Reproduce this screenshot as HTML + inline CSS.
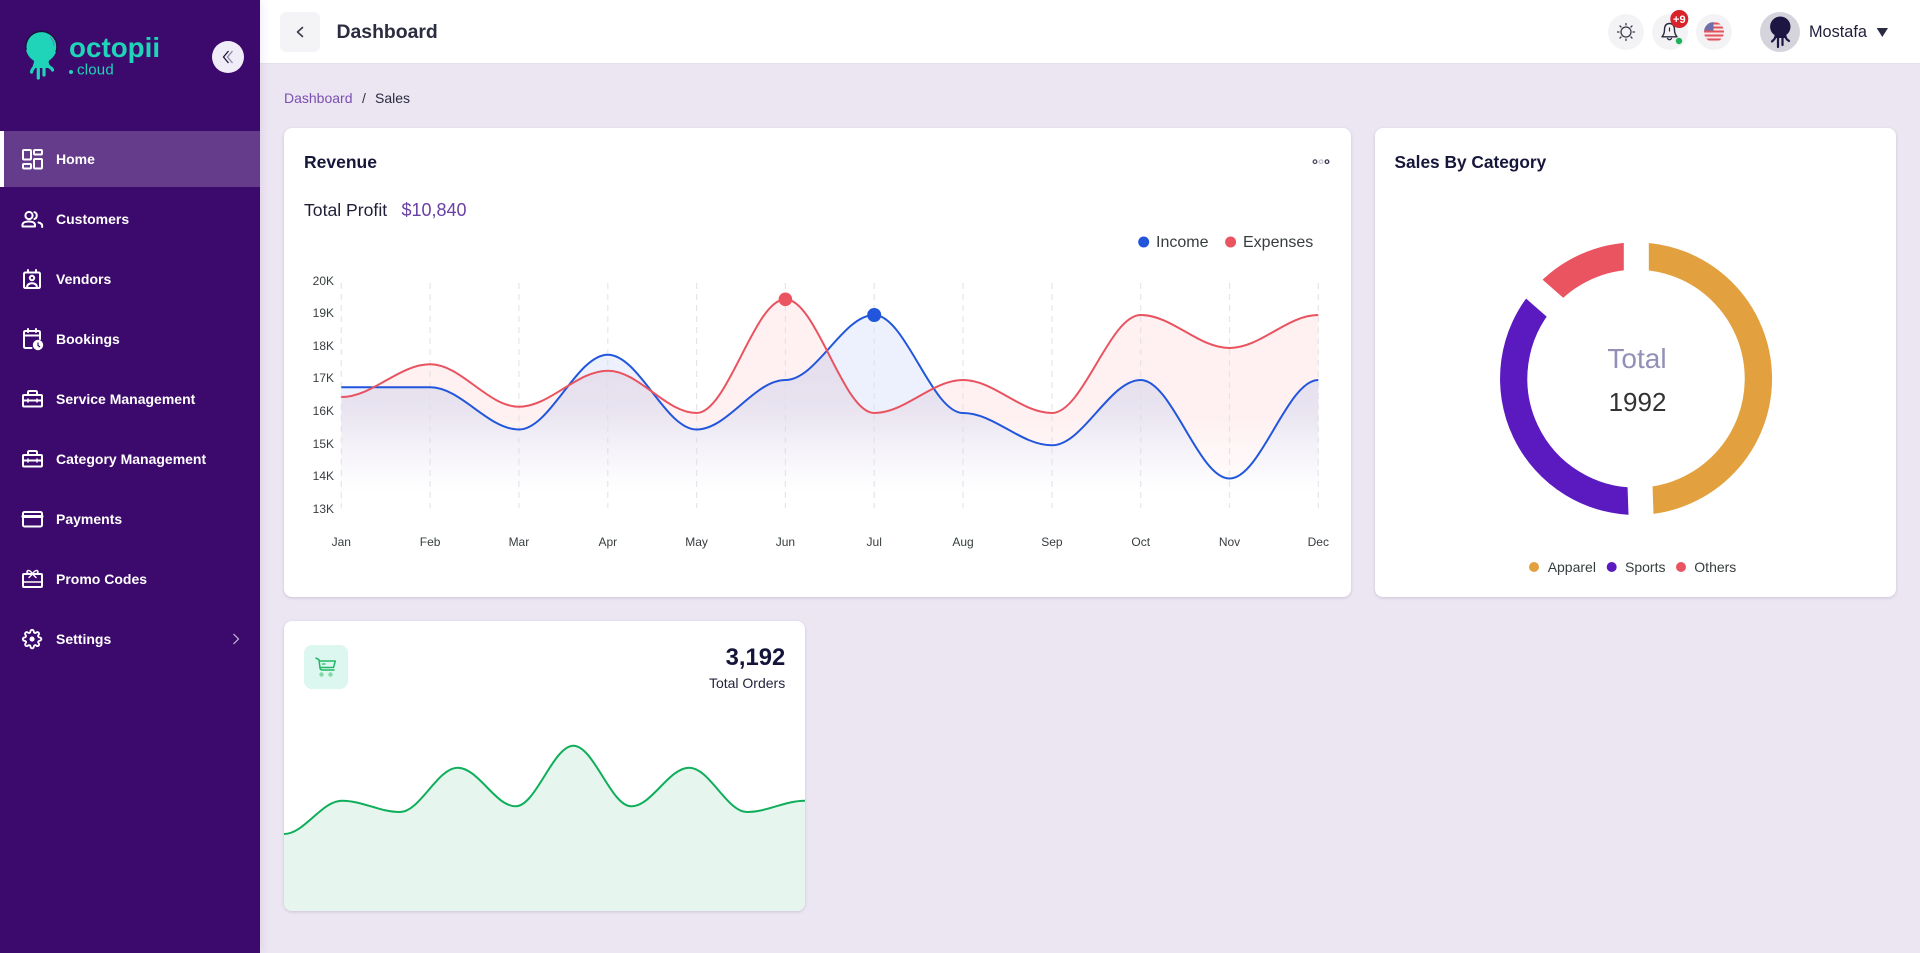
<!DOCTYPE html>
<html><head><meta charset="utf-8"><title>Dashboard</title>
<style>
*{box-sizing:border-box}
html,body{margin:0;padding:0;width:1920px;height:953px;overflow:hidden;background:#ece6f2;font-family:"Liberation Sans",sans-serif}
.t{position:absolute;white-space:nowrap;line-height:20px;height:20px}
#side{position:absolute;left:0;top:0;width:260px;height:953px;background:#3c0a6c;box-shadow:2px 0 8px rgba(60,10,108,.08)}
#act{position:absolute;left:0;top:131px;width:260px;height:56px;background:#653c8b;border-left:4px solid #fff}
.m{left:56px;color:#fff;font-weight:700;font-size:14px}
#head{position:absolute;left:260px;top:0;width:1660px;height:64px;background:#fff;border-bottom:1px solid #e4dfea}
.card{position:absolute;background:#fff;border-radius:8px;box-shadow:0 1px 3px rgba(60,40,90,.18)}
svg{position:absolute;left:0;top:0}
</style></head>
<body>
<div id="head"></div>
<div class="card" style="left:284px;top:128px;width:1067px;height:469px"></div>
<div class="card" style="left:1375px;top:128px;width:521px;height:469px"></div>
<div class="card" style="left:284px;top:621px;width:521px;height:290px"></div>
<div id="side"><div id="act"></div></div>

<div class="t" style="left:280px;top:12px;width:40px;height:40px;background:#f4f4f7;border-radius:6px"></div>
<div class="t" style="left:336.5px;top:22px;font-size:19.4px;font-weight:700;color:#2b2c40">Dashboard</div>
<div class="t" style="left:284px;top:88px;font-size:14px;color:#7a4fb0">Dashboard</div>
<div class="t" style="left:362px;top:88px;font-size:14px;color:#33334a">/</div>
<div class="t" style="left:375px;top:88px;font-size:14px;color:#2a2a40">Sales</div>
<div class="t" style="left:304px;top:152px;font-size:17.5px;font-weight:700;color:#16163a">Revenue</div>
<div class="t" style="left:304px;top:200px;font-size:17.6px;color:#1f1f38">Total Profit</div>
<div class="t" style="left:401.5px;top:200px;font-size:18px;color:#6a3fa5">$10,840</div>
<div class="t" style="left:1394.5px;top:152px;font-size:17.3px;font-weight:700;color:#16163a">Sales By Category</div>
<div class="t" style="right:1134.8px;top:646px;font-size:23.8px;font-weight:700;color:#14143a;line-height:24px;height:24px">3,192</div>
<div class="t" style="right:1134.8px;top:673px;font-size:14px;color:#24243e">Total Orders</div>
<div class="t" style="left:1809px;top:22px;font-size:16.3px;color:#1f1f3a">Mostafa</div>

<div class="t m" style="top:149px">Home</div>
<div class="t m" style="top:209px">Customers</div>
<div class="t m" style="top:269px">Vendors</div>
<div class="t m" style="top:329px">Bookings</div>
<div class="t m" style="top:389px">Service Management</div>
<div class="t m" style="top:449px">Category Management</div>
<div class="t m" style="top:509px">Payments</div>
<div class="t m" style="top:569px">Promo Codes</div>
<div class="t m" style="top:629px">Settings</div>

<svg width="1920" height="953" viewBox="0 0 1920 953" font-family="'Liberation Sans',sans-serif">
<defs>
<linearGradient id="gP" gradientUnits="userSpaceOnUse" x1="0" y1="375" x2="0" y2="492"><stop offset="0" stop-color="#e6dfee"/><stop offset=".3" stop-color="#e9e4f0"/><stop offset=".6" stop-color="#f4f1f8"/><stop offset="1" stop-color="#fff"/></linearGradient>
<linearGradient id="gR" gradientUnits="userSpaceOnUse" x1="0" y1="420" x2="0" y2="492"><stop offset="0" stop-color="#fff1f2"/><stop offset="1" stop-color="#fffdfd"/></linearGradient>
<clipPath id="cI"><path d="M341.3 387.3 C372.4 387.3 399 387.3 430.1 387.3 S487.8 429.5 518.9 429.5 S576.7 354.7 607.8 354.7 S665.5 429.5 696.6 429.5 S754.3 380 785.4 380 S843.1 315 874.2 315 S931.9 413 963 413 S1020.8 445.3 1051.9 445.3 S1109.6 380 1140.7 380 S1198.4 478.5 1229.5 478.5 S1287.2 380 1318.3 380 L1318.3 510 L341.3 510 Z"/></clipPath>
<clipPath id="cE"><path d="M341.3 397 C372.4 397 399 364.3 430.1 364.3 S487.8 406.7 518.9 406.7 S576.7 370.7 607.8 370.7 S665.5 413 696.6 413 S754.3 299.3 785.4 299.3 S843.1 413 874.2 413 S931.9 380 963 380 S1020.8 413 1051.9 413 S1109.6 315 1140.7 315 S1198.4 348 1229.5 348 S1287.2 315 1318.3 315 L1318.3 510 L341.3 510 Z"/></clipPath>
<clipPath id="cO"><rect x="284" y="621" width="521" height="290" rx="8"/></clipPath>
<clipPath id="cF"><circle cx="1714" cy="32" r="10"/></clipPath>
</defs>

<!-- revenue fills -->
<rect x="341" y="290" width="978" height="220" fill="url(#gR)" clip-path="url(#cE)"/>
<rect x="341" y="290" width="978" height="220" fill="#edf1fe" clip-path="url(#cI)"/>
<g clip-path="url(#cI)"><rect x="341" y="290" width="978" height="220" fill="url(#gP)" clip-path="url(#cE)"/></g>

<!-- grid -->
<g stroke="#dcdce6" stroke-opacity=".75" stroke-width="1.2" stroke-dasharray="6 5">
<path d="M341.3 283V508M430.1 283V508M518.9 283V508M607.8 283V508M696.6 283V508M785.4 283V508M874.2 283V508M963 283V508M1051.9 283V508M1140.7 283V508M1229.5 283V508M1318.3 283V508"/>
</g>

<!-- lines -->
<path fill="none" stroke="#2156dc" stroke-width="2" d="M341.3 387.3 C372.4 387.3 399 387.3 430.1 387.3 S487.8 429.5 518.9 429.5 S576.7 354.7 607.8 354.7 S665.5 429.5 696.6 429.5 S754.3 380 785.4 380 S843.1 315 874.2 315 S931.9 413 963 413 S1020.8 445.3 1051.9 445.3 S1109.6 380 1140.7 380 S1198.4 478.5 1229.5 478.5 S1287.2 380 1318.3 380"/>
<path fill="none" stroke="#e95360" stroke-width="2" d="M341.3 397 C372.4 397 399 364.3 430.1 364.3 S487.8 406.7 518.9 406.7 S576.7 370.7 607.8 370.7 S665.5 413 696.6 413 S754.3 299.3 785.4 299.3 S843.1 413 874.2 413 S931.9 380 963 380 S1020.8 413 1051.9 413 S1109.6 315 1140.7 315 S1198.4 348 1229.5 348 S1287.2 315 1318.3 315"/>
<circle cx="785.4" cy="299.3" r="6.8" fill="#ea5360"/>
<circle cx="874.2" cy="315" r="7" fill="#2156dc"/>

<!-- axes -->
<g font-size="12" fill="#373d3f" text-anchor="end">
<text x="334" y="285">20K</text><text x="334" y="317">19K</text><text x="334" y="350">18K</text><text x="334" y="382">17K</text><text x="334" y="415">16K</text><text x="334" y="448">15K</text><text x="334" y="480">14K</text><text x="334" y="513">13K</text>
</g>
<g font-size="12" fill="#373d3f" text-anchor="middle">
<text x="341.3" y="546">Jan</text><text x="430.1" y="546">Feb</text><text x="518.9" y="546">Mar</text><text x="607.8" y="546">Apr</text><text x="696.6" y="546">May</text><text x="785.4" y="546">Jun</text><text x="874.2" y="546">Jul</text><text x="963" y="546">Aug</text><text x="1051.9" y="546">Sep</text><text x="1140.7" y="546">Oct</text><text x="1229.5" y="546">Nov</text><text x="1318.3" y="546">Dec</text>
</g>
<circle cx="1143.7" cy="242" r="5.5" fill="#2156dc"/>
<text x="1156" y="247" font-size="16" fill="#373d3f">Income</text>
<circle cx="1230.6" cy="242" r="5.5" fill="#ea5360"/>
<text x="1243" y="247" font-size="16" fill="#373d3f">Expenses</text>

<!-- dots menu -->
<g fill="none" stroke-width="1.3"><circle cx="1315" cy="161.7" r="1.8" stroke="#4a4a60"/><circle cx="1321" cy="161.7" r="1.8" stroke="#c5c0d5"/><circle cx="1327" cy="161.7" r="1.8" stroke="#3a3a50"/></g>

<!-- donut -->
<g fill="none" stroke-width="27.3">
<path stroke="#e2a03f" d="M1636.3 256 A122.7 122.7 0 0 1 1640.6 501.3"/>
<path stroke="#5a1ac0" d="M1640.6 501.3 A122.7 122.7 0 0 1 1544.2 297.7"/>
<path stroke="#ea5460" d="M1544.2 297.7 A122.7 122.7 0 0 1 1636.3 256"/>
</g>
<g stroke="#fff" stroke-width="25"><path d="M1636.3 378.7 L1636.3 228"/><path d="M1636.3 378.7 L1641.5 528.6"/><path d="M1636.3 378.7 L1523.6 279.7"/></g>
<text x="1637" y="368" font-size="28" fill="#9390b8" text-anchor="middle">Total</text>
<text x="1637.5" y="411" font-size="26" fill="#333" text-anchor="middle">1992</text>
<circle cx="1534" cy="567" r="5" fill="#e2a03f"/><text x="1547.7" y="572" font-size="14" fill="#373d3f">Apparel</text>
<circle cx="1611.7" cy="567" r="5" fill="#5a1ac0"/><text x="1625" y="572" font-size="14" fill="#373d3f">Sports</text>
<circle cx="1681" cy="567" r="5" fill="#ea5460"/><text x="1694.3" y="572" font-size="14" fill="#373d3f">Others</text>

<!-- orders -->
<g clip-path="url(#cO)">
<path fill="#e6f6ee" d="M284 834 C304.3 834 321.6 800.7 341.9 800.7 S379.5 812 399.8 812 S437.4 767.7 457.7 767.7 S495.3 806.3 515.6 806.3 S553.1 745.7 573.4 745.7 S611 806.3 631.3 806.3 S668.9 767.7 689.2 767.7 S726.8 812 747.1 812 S784.7 800.7 805 800.7 L805 911 L284 911 Z"/>
<path fill="none" stroke="#0fae5a" stroke-width="2" d="M284 834 C304.3 834 321.6 800.7 341.9 800.7 S379.5 812 399.8 812 S437.4 767.7 457.7 767.7 S495.3 806.3 515.6 806.3 S553.1 745.7 573.4 745.7 S611 806.3 631.3 806.3 S668.9 767.7 689.2 767.7 S726.8 812 747.1 812 S784.7 800.7 805 800.7"/>
</g>
<rect x="304" y="645" width="44" height="44" rx="8" fill="#dcf6f0"/>
<g fill="none" stroke="#22b866" stroke-width="1.5" stroke-linecap="round" stroke-linejoin="round">
<path d="M316 658 L319 659.8 L320 668 Q320.3 670 322.5 670 H334"/>
<path d="M319.3 661 H335.3 L333.5 667.5 H320"/>
<path d="M322.5 664 H325" stroke-width="1.2"/>
</g>
<circle cx="321.5" cy="674.5" r="2.2" fill="#7fd9a8"/><circle cx="330.5" cy="674.5" r="2.2" fill="#7fd9a8"/>

<!-- header controls -->
<path d="M302.5 27.5 L297.5 32 L302.5 36.5" fill="none" stroke="#3a3a4e" stroke-width="1.6" stroke-linecap="round" stroke-linejoin="round"/>
<circle cx="1626" cy="32" r="18" fill="#f3f3f6"/>
<circle cx="1670" cy="32" r="18" fill="#f3f3f6"/>
<circle cx="1714" cy="32" r="18" fill="#f3f3f6"/>
<g fill="none" stroke="#3a3a4a" stroke-width="1.3" stroke-linecap="round">
<circle cx="1626" cy="32" r="5"/>
<path d="M1626 23.5V25M1626 39V40.5M1617.5 32H1619M1633 32H1634.5M1620 26L1621 27M1631 37L1632 38M1632 26L1631 27M1621 37L1620 38"/>
</g>
<g fill="none" stroke="#2a2a3c" stroke-width="1.4" stroke-linecap="round" stroke-linejoin="round">
<path d="M1669.5 23.5 C1665.5 23.5 1664.5 27 1664.5 30 C1664.5 33 1663.5 35 1662 36.8 H1677 C1675.5 35 1674.5 33 1674.5 30 C1674.5 27 1673.5 23.5 1669.5 23.5Z"/>
<path d="M1667.5 38.5 Q1669.5 41 1671.5 38.5"/>
<path d="M1669.5 28V31" stroke-width="1.2"/>
</g>
<circle cx="1679.3" cy="19" r="9" fill="#d8232a"/>
<text x="1679.3" y="23" font-size="11" font-weight="700" fill="#fff" text-anchor="middle">+9</text>
<circle cx="1679" cy="41" r="3.2" fill="#1fb05c"/>
<g clip-path="url(#cF)">
<rect x="1704" y="22" width="20" height="20" fill="#f6e9ea"/>
<path d="M1704 23.5H1724M1704 27.5H1724M1704 31.5H1724M1704 35.5H1724M1704 39.5H1724" stroke="#e2545c" stroke-width="2"/>
<rect x="1704" y="22" width="9.5" height="8.5" fill="#6e6fa8"/>
</g>
<circle cx="1780" cy="32" r="20" fill="#d5d3dc"/>
<circle cx="1780.3" cy="26.7" r="10.2" fill="#1d1542"/>
<path d="M1775 33H1786V38H1775Z" fill="#1d1542"/>
<g fill="none" stroke="#1d1542" stroke-width="2.2" stroke-linecap="round">
<path d="M1775.5 36C1775 40 1773 40 1772 41.5"/><path d="M1778 37V47"/><path d="M1782.5 37V45"/><path d="M1785.5 36C1786 40 1788 40 1789 41"/>
</g>
<path d="M1876.7 28H1888L1882.3 37Z" fill="#2a2a40"/>

<!-- logo -->
<circle cx="41.3" cy="47" r="15.5" fill="#1fd4b8"/>
<path d="M26 50 A15.5 15.5 0 0 1 56.8 44 A15.5 15.5 0 0 1 56 52" fill="none" stroke="#1a1240" stroke-width="1.6"/>
<path d="M50 37 A11 11 0 0 1 54 46" fill="none" stroke="#7a6fc0" stroke-width="1"/>
<path d="M33 58H49.5L47.5 68H35.5Z" fill="#1fd4b8"/>
<g fill="none" stroke="#1fd4b8" stroke-width="3.2" stroke-linecap="round">
<path d="M35 64C34.5 69 32 68 31.5 72"/><path d="M38.3 66V78"/><path d="M44 66V75"/><path d="M47.5 64C48 68 52 67 52.5 70"/>
</g>
<text x="69" y="57" font-size="27.8" font-weight="700" fill="#1fd4b8">octopii</text>
<circle cx="71" cy="72" r="2" fill="#1fd4b8"/>
<text x="77" y="74.5" font-size="15" letter-spacing=".2" fill="#1fd4b8">cloud</text>
<circle cx="228" cy="57" r="16" fill="#f0edf8"/>
<path d="M228.5 51 L223.5 57 L228.5 63" fill="none" stroke="#1f1a3a" stroke-width="1.3"/>
<path d="M232.5 51 L227.5 57 L232.5 63" fill="none" stroke="#8f88a8" stroke-width="1.3"/>

<!-- sidebar icons -->
<g fill="none" stroke="#fff" stroke-width="2" stroke-linejoin="round" stroke-linecap="round">
<rect x="23" y="150" width="8" height="9.5" rx="1"/><rect x="34" y="150" width="8" height="4.5" rx="1"/><rect x="23" y="164" width="8" height="4.5" rx="1"/><rect x="34" y="159" width="8" height="9.5" rx="1"/>
<!-- customers -->
<circle cx="29" cy="215.5" r="3.6"/><path d="M22.5 226.5 H35 C35.6 222.8 33 221.5 28.8 221.5 C24.6 221.5 21.8 222.8 22.5 226.5Z"/><path d="M34.5 212.2 C37.5 213 37.5 218 34.5 219"/><path d="M38.5 222.5 C41 223 42.5 224.5 42.2 227"/>
<!-- vendors -->
<rect x="24" y="272.5" width="16" height="15.5" rx="1.3"/><path d="M28 270V272.5M36 270V272.5"/><circle cx="32" cy="278" r="2.2"/><path d="M27 288 C27 284.5 29 283.2 32 283.2 C35 283.2 37 284.5 37 288"/>
<!-- bookings -->
<path d="M31.5 348 H25.5 Q24 348 24 346.5 V332.5 Q24 331 25.5 331 H38.5 Q40 331 40 332.5 V339"/><path d="M24 335.5H40M28 329V332M36 329V332"/>
<!-- service -->
<rect x="23" y="395" width="19" height="11.5" rx="1"/><path d="M28 395V392.5 Q28 391 29.5 391 H35.5 Q37 391 37 392.5 V395"/><path d="M23 400.5H42" /><path d="M28 399V402M37 399V402" stroke-width="1.5"/>
<!-- category -->
<rect x="23" y="455" width="19" height="11.5" rx="1"/><path d="M28 455V452.5 Q28 451 29.5 451 H35.5 Q37 451 37 452.5 V455"/><path d="M23 460.5H42"/><path d="M28 459V462M37 459V462" stroke-width="1.5"/>
<!-- payments -->
<rect x="23" y="512" width="19" height="14.5" rx="1.5"/><path d="M23 516.5H42" stroke-width="3"/>
<!-- promo -->
<rect x="23" y="574" width="19" height="13" rx="1"/><path d="M23 582H42" stroke-width="1.6"/><path d="M32.5 574 C30 569.5 27 570 27 572 C27 574 30 574 32.5 574 C35 574 38 574 38 572 C38 570 35 569.5 32.5 574Z" stroke-width="1.5"/><path d="M32.5 574 L29 577.5M32.5 574 L36 577.5" stroke-width="1.4"/>
</g>
<circle cx="38" cy="345" r="5.2" fill="#fff"/><path d="M38 342.5V345.5L40 347" fill="none" stroke="#3c0a6c" stroke-width="1.2"/>
<g transform="translate(22 629) scale(.84)" fill="none" stroke="#fff" stroke-width="2.2" stroke-linejoin="round">
<path d="M19.4 15a1.65 1.65 0 0 0 .33 1.82l.06.06a2 2 0 0 1 0 2.83 2 2 0 0 1-2.83 0l-.06-.06a1.65 1.65 0 0 0-1.82-.33 1.65 1.65 0 0 0-1 1.51V21a2 2 0 0 1-2 2 2 2 0 0 1-2-2v-.09A1.65 1.65 0 0 0 9 19.4a1.65 1.65 0 0 0-1.82.33l-.06.06a2 2 0 0 1-2.83 0 2 2 0 0 1 0-2.83l.06-.06a1.65 1.65 0 0 0 .33-1.82 1.65 1.65 0 0 0-1.51-1H3a2 2 0 0 1-2-2 2 2 0 0 1 2-2h.09A1.65 1.65 0 0 0 4.6 9a1.65 1.65 0 0 0-.33-1.82l-.06-.06a2 2 0 0 1 0-2.83 2 2 0 0 1 2.83 0l.06.06a1.65 1.65 0 0 0 1.82.33H9a1.65 1.65 0 0 0 1-1.51V3a2 2 0 0 1 2-2 2 2 0 0 1 2 2v.09a1.65 1.65 0 0 0 1 1.51 1.65 1.65 0 0 0 1.82-.33l.06-.06a2 2 0 0 1 2.83 0 2 2 0 0 1 0 2.83l-.06.06a1.65 1.65 0 0 0-.33 1.82V9a1.65 1.65 0 0 0 1.51 1H21a2 2 0 0 1 2 2 2 2 0 0 1-2 2h-.09a1.65 1.65 0 0 0-1.51 1z"/>
<circle cx="12" cy="12" r="3" fill="#fff" stroke="none"/>
</g>
<path d="M233.5 634 L238.5 639 L233.5 644" fill="none" stroke="#cfc6de" stroke-width="1.1"/>
</svg>
</body></html>
